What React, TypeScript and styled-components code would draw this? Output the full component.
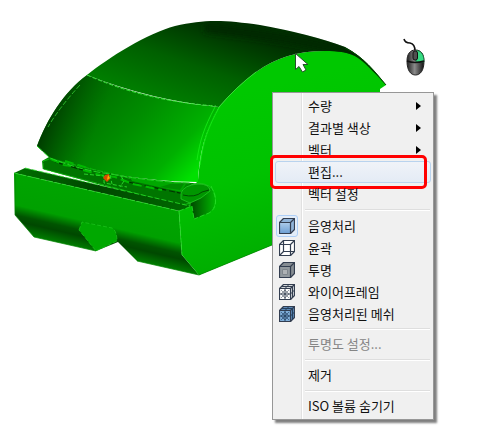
import React from "react";
import styled, { createGlobalStyle } from "styled-components";

const GlobalStyle = createGlobalStyle`
  * { box-sizing: border-box; }
  body { margin: 0; background: #fff; font-family: "Noto Sans CJK KR", sans-serif; }
`;

const Viewport = styled.main`
  position: relative;
  min-height: 100vh;
  overflow: hidden;
`;

const Scene = styled.svg`
  display: block;
`;

const Menu = styled.div`
  position: absolute;
  left: 272px;
  top: 92px;
  width: 162px;
  padding: 2px;
  border: 1px solid #979797;
  background: linear-gradient(90deg, #f0f0f0 28px, #e1e1e1 28px, #e1e1e1 29px, #fff 29px, #fff 30px, #f0f0f0 30px);
  box-shadow: 3px 3px 2px rgba(0, 0, 0, 0.5);
`;

const Item = styled.button<{ $hot?: boolean }>`
  position: relative;
  display: grid;
  grid-template-columns: 20px 1fr 14px;
  column-gap: 12px;
  align-items: center;
  width: 100%;
  height: 22px;
  padding: 0;
  border: 1px solid ${(p) => (p.$hot ? "#b9d3ee" : "transparent")};
  border-radius: 3px;
  background: ${(p) => (p.$hot ? "linear-gradient(#f0f3f8, #e4ebf5)" : "none")};
  color: #111;
  font: 13px/20px "Noto Sans CJK KR", sans-serif;
  text-align: left;
  white-space: nowrap;

  &:disabled { color: #858585; }
`;

const Label = styled.span`
  grid-column: 2;
`;

const IconSlot = styled.span<{ $on?: boolean }>`
  display: grid;
  place-items: center;
  width: 22px;
  height: 22px;
  border: 1px solid ${(p) => (p.$on ? "#aecff7" : "transparent")};
  border-radius: 3px;
  background: ${(p) => (p.$on ? "#e3edf9" : "none")};
`;

const Separator = styled.hr`
  height: 2px;
  margin: 4px 1px 3px 30px;
  border: 0;
  border-top: 1px solid #dedede;
  border-bottom: 1px solid #fff;
`;

const Callout = styled.span`
  position: absolute;
  inset: -7px 3px -7px -6px;
  border: 3px solid #f00;
  border-radius: 5px;
  pointer-events: none;
`;

const Arrow = () => (
  <svg width="5" height="8" viewBox="0 0 5 8" aria-hidden="true">
    <path d="M0 0L5 4L0 8Z" fill="#000" />
  </svg>
);

type Kind = "shaded" | "outline" | "transparent" | "wire" | "mesh";

const Cube = ({ kind }: { kind: Kind }) => {
  const front = { shaded: "url(#cubeBlue)", outline: "#fff", transparent: "#92999e", wire: "#fff", mesh: "#7eadd8" }[kind];
  const side = { shaded: "#8fb3d8", outline: "#fff", transparent: "#868d93", wire: "#d0d4d8", mesh: "#5d89b6" }[kind];
  const line = "#333e50";
  const meshed = kind === "wire" || kind === "mesh";
  return (
    <svg width="16" height="16" viewBox="0 0 16 16" aria-hidden="true">
      <defs>
        <linearGradient id="cubeBlue" x1="0" y1="0" x2="0" y2="1">
          <stop offset="0" stopColor="#c3dbf2" />
          <stop offset="1" stopColor="#6d9fd3" />
        </linearGradient>
      </defs>
      <path d="M0.5 4.5L4.5 0.5H15.5V11.5L11.5 15.5H0.5Z" fill={side} stroke={line} strokeWidth="1.2" strokeLinejoin="round" />
      <path d="M0.5 4.5H11.5V15.5H0.5ZM11.5 4.5L15.5 0.5" fill={front} stroke={line} strokeWidth="1.2" />
      {kind === "outline" && <path d="M4.5 0.5V11.5H15.5M4.5 11.5L0.5 15.5" fill="none" stroke={line} strokeWidth="1.2" />}
      {kind === "transparent" && <path d="M3.5 7.5H8.5V12.5H3.5Z" fill="#aeb2b5" stroke="#7f868c" />}
      {meshed && (
        <>
          <path
            d="M2 6L10 14M10 6L2 14M2 10L6 6L10 10L6 14Z"
            fill="none"
            stroke={kind === "mesh" ? "#29476c" : "#6b7480"}
            strokeWidth="0.7"
          />
          <path
            d="M6 4.5V15.5M0.5 10H11.5M2.5 2.5H13.5V13.5M6 4.5L10 0.5M11.5 10L15.5 6"
            fill="none"
            stroke={kind === "mesh" ? "#24405f" : line}
            strokeWidth="1"
          />
        </>
      )}
    </svg>
  );
};

const ROOF =
  "M87 75C108 58 148 33 175 26C205 19 225 20 260 25Q310 34 345 47C364 57 375 72 386 85C377 76 369 66 358 58C350 52 338 51 325 51C296 51 276 58 256 72Q236 87 219 107Q150 100 87 75Z";
const FRONT = "M14 173L179 211L182 255L199 275L137 261L118 242L96 251L34 237L15 215Z";

const Model = () => (
  <Scene width="440" height="290" viewBox="0 0 440 290" role="img" aria-label="ISO 볼륨">
    <defs>
      <linearGradient id="roof" gradientUnits="userSpaceOnUse" x1="205" y1="20" x2="175" y2="108">
        <stop offset="0" stopColor="#003000" />
        <stop offset="0.14" stopColor="#003c00" />
        <stop offset="0.5" stopColor="#006000" />
        <stop offset="1" stopColor="#008000" />
      </linearGradient>
      <linearGradient id="rear" gradientUnits="userSpaceOnUse" x1="85" y1="80" x2="190" y2="178">
        <stop offset="0" stopColor="#006a00" />
        <stop offset="0.45" stopColor="#008d00" />
        <stop offset="0.8" stopColor="#00b000" />
        <stop offset="1" stopColor="#00e000" />
      </linearGradient>
      <linearGradient id="rearEdge" gradientUnits="userSpaceOnUse" x1="43" y1="130" x2="90" y2="147">
        <stop offset="0" stopColor="#003800" stopOpacity="0.9" />
        <stop offset="1" stopColor="#006000" stopOpacity="0" />
      </linearGradient>
      <linearGradient id="flank" gradientUnits="userSpaceOnUse" x1="210" y1="100" x2="250" y2="260">
        <stop offset="0" stopColor="#00c800" />
        <stop offset="0.5" stopColor="#00c200" />
        <stop offset="1" stopColor="#00ae00" />
      </linearGradient>
      <linearGradient id="face" gradientUnits="userSpaceOnUse" x1="90" y1="180" x2="74" y2="249">
        <stop offset="0" stopColor="#00a600" />
        <stop offset="0.58" stopColor="#00a000" />
        <stop offset="0.72" stopColor="#005400" />
        <stop offset="0.8" stopColor="#004800" />
        <stop offset="1" stopColor="#008900" />
      </linearGradient>
      <linearGradient id="ledge" gradientUnits="userSpaceOnUse" x1="20" y1="170" x2="185" y2="208">
        <stop offset="0" stopColor="#006d00" />
        <stop offset="0.45" stopColor="#004600" />
        <stop offset="1" stopColor="#006800" />
      </linearGradient>
      <linearGradient id="pocket" x1="0" y1="0" x2="1" y2="0">
        <stop offset="0" stopColor="#004900" />
        <stop offset="1" stopColor="#00b500" />
      </linearGradient>
      <linearGradient id="mouseBody" x1="0" y1="0" x2="1" y2="0">
        <stop offset="0" stopColor="#202020" />
        <stop offset="0.45" stopColor="#8b8b8b" />
        <stop offset="1" stopColor="#101010" />
      </linearGradient>
      <filter id="soft" x="-10%" y="-80%" width="120%" height="260%">
        <feGaussianBlur stdDeviation="3" />
      </filter>
      <clipPath id="roofClip">
        <path d={ROOF} />
      </clipPath>
    </defs>

    <path d="M219 107Q236 87 256 72C276 58 296 51 325 51L345 48C364 57 375 72 386 85L380 89V200L272 245L199 275L179 212L198 180Q202 130 219 107Z" fill="url(#flank)" />
    <path d={ROOF} fill="url(#roof)" />
    <path d="M205 28Q300 38 353 53" fill="none" stroke="#002700" strokeWidth="8" filter="url(#soft)" clipPath="url(#roofClip)" />
    <path d="M345 48C364 57 375 72 386 85" fill="none" stroke="#004a00" />
    <path d="M37 146C47 119 64 92 87 75Q150 101 219 107C205 130 199 155 198 182Q120 181 50 158Z" fill="url(#rear)" />
    <path d="M37 146C47 119 64 92 87 75L115 85L94 170L50 158Z" fill="url(#rearEdge)" />
    <path d="M87 75Q145 101 216 106" fill="none" stroke="#3be93b" strokeDasharray="4 2" />
    <path d="M215 107C204 128 200 140 197 160M220 106C208 127 203 142 200 165" fill="none" stroke="#19ef19" strokeWidth="0.8" />
    <path d="M80 85Q59 108 48 127" fill="none" stroke="#36cf36" strokeWidth="0.8" strokeDasharray="5 2" />
    <path d="M219 107Q236 87 256 72" fill="none" stroke="#35e835" strokeWidth="0.8" />

    <path d="M42 161L49 157Q120 180 193 183L211 187L208 205L180 207L43 169Z" fill="#008600" />
    <path d="M43 161L50 159L191 193L197 202L180 205L43 169Z" fill="#007500" stroke="#18cf18" strokeWidth="0.7" strokeDasharray="6 1" />
    <path d="M55 162L90 172M128 182L189 195" fill="none" stroke="#003400" strokeWidth="1.2" strokeDasharray="14 3 6 2" />
    <path d="M51 159L64 165L71 166M65 161L91 169M83 170L100 175L115 177L133 184L162 190" fill="none" stroke="#00b900" strokeWidth="2" strokeDasharray="9 4" />
    <path d="M84 174L104 176L104 183L127 187M110 175L112 184M121 176L124 181L120 187" fill="none" stroke="#29d329" strokeDasharray="4 2" />
    <path d="M130 177L186 184L181 192L132 181Z" fill="#00a800" />
    <path d="M160 187L170 184H184L180 190Z" fill="#008b00" />
    <path d="M191 185C200 181 212 184 215 195C217 210 209 216 195 219L190 207Z" fill="url(#pocket)" stroke="#20d820" strokeWidth="0.7" />
    <path d="M37 146L50 158Q80 170 110 174Q155 182 190 183" fill="none" stroke="#22d522" strokeDasharray="7 2" />
    <path d="M105 175L109 174L110 179L107 182L103 178Z" fill="#d84a00" />
    <path d="M108 175L110 178L107 180Z" fill="#ffb000" />

    <path d="M14 173L25 168L190 206L193 208L179 211Z" fill="url(#ledge)" />
    <path d={FRONT} fill="url(#face)" />
    <path d="M79 230L82 222L112 228Q117 231 117 241L96 251Z" fill="#00a800" stroke="#24cf24" strokeWidth="0.6" strokeDasharray="4 2" />
    <path d="M194 219L214 208L272 180V245L199 275L182 255L179 211L192 206Z" fill="url(#flank)" />
    <path d="M191 200C200 199 207 195 212 188Q219 205 209 213L194 219Z" fill="url(#pocket)" />
    <path d="M181 193Q184 185 198 184Q210 184 210 191Q202 199 190 203L181 199Z" fill="#009600" stroke="#29cf29" strokeWidth="0.7" />
    <path d="M183 195Q195 198 202 192L209 190" fill="none" stroke="#004a00" />
    <path d="M211 186Q221 206 209 213L194 219" fill="none" stroke="#29df29" strokeWidth="0.8" strokeDasharray="5 2" />
    <path d="M14 173L179 211L182 255M179 211L192 206L194 219M25 168L190 206" fill="none" stroke="#29df29" strokeWidth="0.8" strokeDasharray="5 2" />
    <path d="M15 173V215L34 237L96 251M137 261L199 275L272 245" fill="none" stroke="#008300" strokeWidth="0.7" />

    <path d="M295.5 53.5V69.5L299 66.5L302.5 72L306 70L303 64.5H308Z" fill="#fff" stroke="#27502b" />

    <path d="M404 39Q405 43 410 43Q415 44 415 51" fill="none" stroke="#111" strokeWidth="1.6" />
    <path d="M415.5 50C421 50 424 54 424 61C424 71 420 75 415.5 75C411 75 407 71 407 61C407 54 410 50 415.5 50Z" fill="url(#mouseBody)" stroke="#222" />
    <path d="M417 50.5C422 51 424 56 424 62H416V51Z" fill="#36dc83" stroke="#18733f" strokeWidth="0.7" />
    <path d="M407 61Q415 64 424 61" fill="none" stroke="#111" strokeWidth="1.5" />
    <rect x="413" y="51" width="4.5" height="9" rx="2" fill="#505050" stroke="#111" />
  </Scene>
);

const displayModes: { kind: Kind; label: string; on?: boolean }[] = [
  { kind: "shaded", label: "음영처리", on: true },
  { kind: "outline", label: "윤곽" },
  { kind: "transparent", label: "투명" },
  { kind: "wire", label: "와이어프레임" },
  { kind: "mesh", label: "음영처리된 메쉬" },
];

export default function App() {
  return (
    <>
      <GlobalStyle />
      <Viewport>
        <Model />
        <Menu role="menu">
          {["수량", "결과별 색상", "벡터"].map((label) => (
            <Item key={label} role="menuitem" aria-haspopup="menu">
              <Label>{label}</Label>
              <Arrow />
            </Item>
          ))}
          <Item role="menuitem" $hot>
            <Label>편집...</Label>
            <Callout />
          </Item>
          <Item role="menuitem">
            <Label>벡터 설정</Label>
          </Item>
          <Separator />
          {displayModes.map((mode) => (
            <Item key={mode.kind} role="menuitemradio" aria-checked={!!mode.on}>
              <IconSlot $on={mode.on}>
                <Cube kind={mode.kind} />
              </IconSlot>
              <Label>{mode.label}</Label>
            </Item>
          ))}
          <Separator />
          <Item role="menuitem" disabled>
            <Label>투명도 설정...</Label>
          </Item>
          <Separator />
          <Item role="menuitem">
            <Label>제거</Label>
          </Item>
          <Separator />
          <Item role="menuitem">
            <Label>ISO 볼륨 숨기기</Label>
          </Item>
        </Menu>
      </Viewport>
    </>
  );
}
